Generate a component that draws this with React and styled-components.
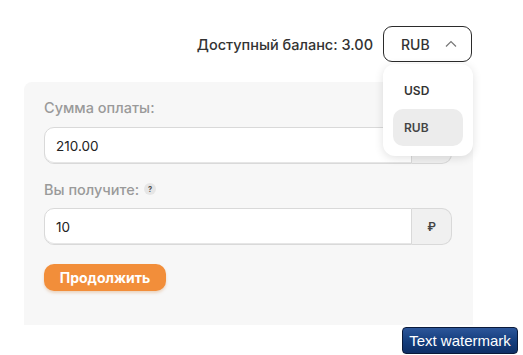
import React from "react";
import styled, { createGlobalStyle } from "styled-components";

const Global = createGlobalStyle`
  html, body { margin: 0; padding: 0; background: #fff; }
  body { font-family: Inter, "Noto Sans", sans-serif; color: #333; }
  * { box-sizing: border-box; }
`;

const Page = styled.div`
  position: relative;
  width: 523px;
  height: 355px;
  padding-top: 26px;
`;

const TopBar = styled.div`
  display: flex;
  justify-content: flex-end;
  align-items: center;
  gap: 10px;
  padding-right: 51px;
`;

const Balance = styled.span`
  font-size: 14.5px;
  font-weight: 500;
  color: #333;
`;

const SelectWrap = styled.div`
  position: relative;
`;

const SelectButton = styled.div`
  width: 89px;
  height: 36px;
  border: 1px solid #2b2b2b;
  border-radius: 9px;
  display: flex;
  align-items: center;
  justify-content: space-between;
  padding: 0 14px 0 17px;
  font-size: 14px;
  font-weight: 500;
  color: #333;
  background: #fff;
`;

const Menu = styled.div`
  position: absolute;
  top: 38px;
  left: 0;
  width: 90px;
  padding: 8px 10px 10px;
  background: #fff;
  border-radius: 12px;
  box-shadow: 0 2px 10px rgba(0, 0, 0, 0.12);
  display: flex;
  flex-direction: column;
  z-index: 5;
`;

const MenuItem = styled.div`
  height: 37px;
  display: flex;
  align-items: center;
  padding-left: 11px;
  font-size: 12px;
  font-weight: 600;
  color: ${(p) => (p.$active ? "#444" : "#333")};
  background: ${(p) => (p.$active ? "#ececec" : "transparent")};
  border-radius: 10px;
`;

const Card = styled.div`
  margin: 20px 0 0 24px;
  width: 449px;
  height: 243px;
  background: #f7f7f7;
  border-radius: 8px 8px 0 0;
  padding: 16px 21px 0 20px;
  display: flex;
  flex-direction: column;
`;

const Label = styled.div`
  display: flex;
  align-items: center;
  gap: 5px;
  font-size: 14.5px;
  font-weight: 500;
  color: #9a9a9a;
  height: 18px;
  margin-bottom: ${(p) => p.$mb}px;
`;

const Hint = styled.span`
  width: 12px;
  height: 12px;
  border-radius: 50%;
  background: #e6e6e6;
  color: #555;
  font-size: 7.5px;
  font-weight: 700;
  display: inline-flex;
  align-items: center;
  justify-content: center;
`;

const InputRow = styled.div`
  display: flex;
  height: 37px;
  margin-bottom: ${(p) => p.$mb}px;
`;

const Field = styled.div`
  flex: 1;
  background: #fff;
  border: 1px solid #d9d9d9;
  border-radius: 10px 0 0 10px;
  display: flex;
  align-items: center;
  padding-left: 11px;
  font-size: 13.5px;
  color: #222;
  box-shadow: inset 0 -1px 0 #e6e6e6;
`;

const Addon = styled.div`
  width: 40px;
  background: #f0f0f0;
  border: 1px solid #d9d9d9;
  border-left: none;
  border-radius: 0 10px 10px 0;
  display: flex;
  align-items: center;
  justify-content: center;
  font-size: 12px;
  font-weight: 600;
  color: #444;
`;

const Submit = styled.button`
  align-self: flex-start;
  height: 27px;
  width: 122px;
  border: none;
  border-radius: 10px;
  background: #f28e3a;
  color: #fff;
  font-family: Inter, "Noto Sans", sans-serif;
  font-size: 14px;
  font-weight: 700;
  box-shadow: 0 2px 3px rgba(200, 110, 30, 0.25);
  padding: 0;
`;

const Watermark = styled.div`
  position: absolute;
  right: 5px;
  bottom: 1px;
  height: 27px;
  width: 116px;
  display: flex;
  align-items: center;
  justify-content: center;
  border: 1px solid #0a1a3a;
  border-radius: 4px;
  background: linear-gradient(#2c569a, #143d7c 55%, #0e2f66);
  color: #fff;
  font-family: "Liberation Sans", Arial, sans-serif;
  font-size: 15px;
`;

const Chevron = () => (
  <svg width="12" height="8" viewBox="0 0 12 8" fill="none">
    <path d="M1 6.5 L6 1.5 L11 6.5" stroke="#777" strokeWidth="1.2" />
  </svg>
);

export default function App() {
  return (
    <>
      <Global />
      <Page>
        <TopBar>
          <Balance>Доступный баланс: 3.00</Balance>
          <SelectWrap>
            <SelectButton>
              <span>RUB</span>
              <Chevron />
            </SelectButton>
            <Menu>
              <MenuItem>USD</MenuItem>
              <MenuItem $active>RUB</MenuItem>
            </Menu>
          </SelectWrap>
        </TopBar>
        <Card>
          <Label $mb={11}>Сумма оплаты:</Label>
          <InputRow $mb={16}>
            <Field>210.00</Field>
            <Addon>₽</Addon>
          </InputRow>
          <Label $mb={10}>
            Вы получите: <Hint>?</Hint>
          </Label>
          <InputRow $mb={19}>
            <Field>10</Field>
            <Addon>₽</Addon>
          </InputRow>
          <Submit>Продолжить</Submit>
        </Card>
        <Watermark>Text watermark</Watermark>
      </Page>
    </>
  );
}
